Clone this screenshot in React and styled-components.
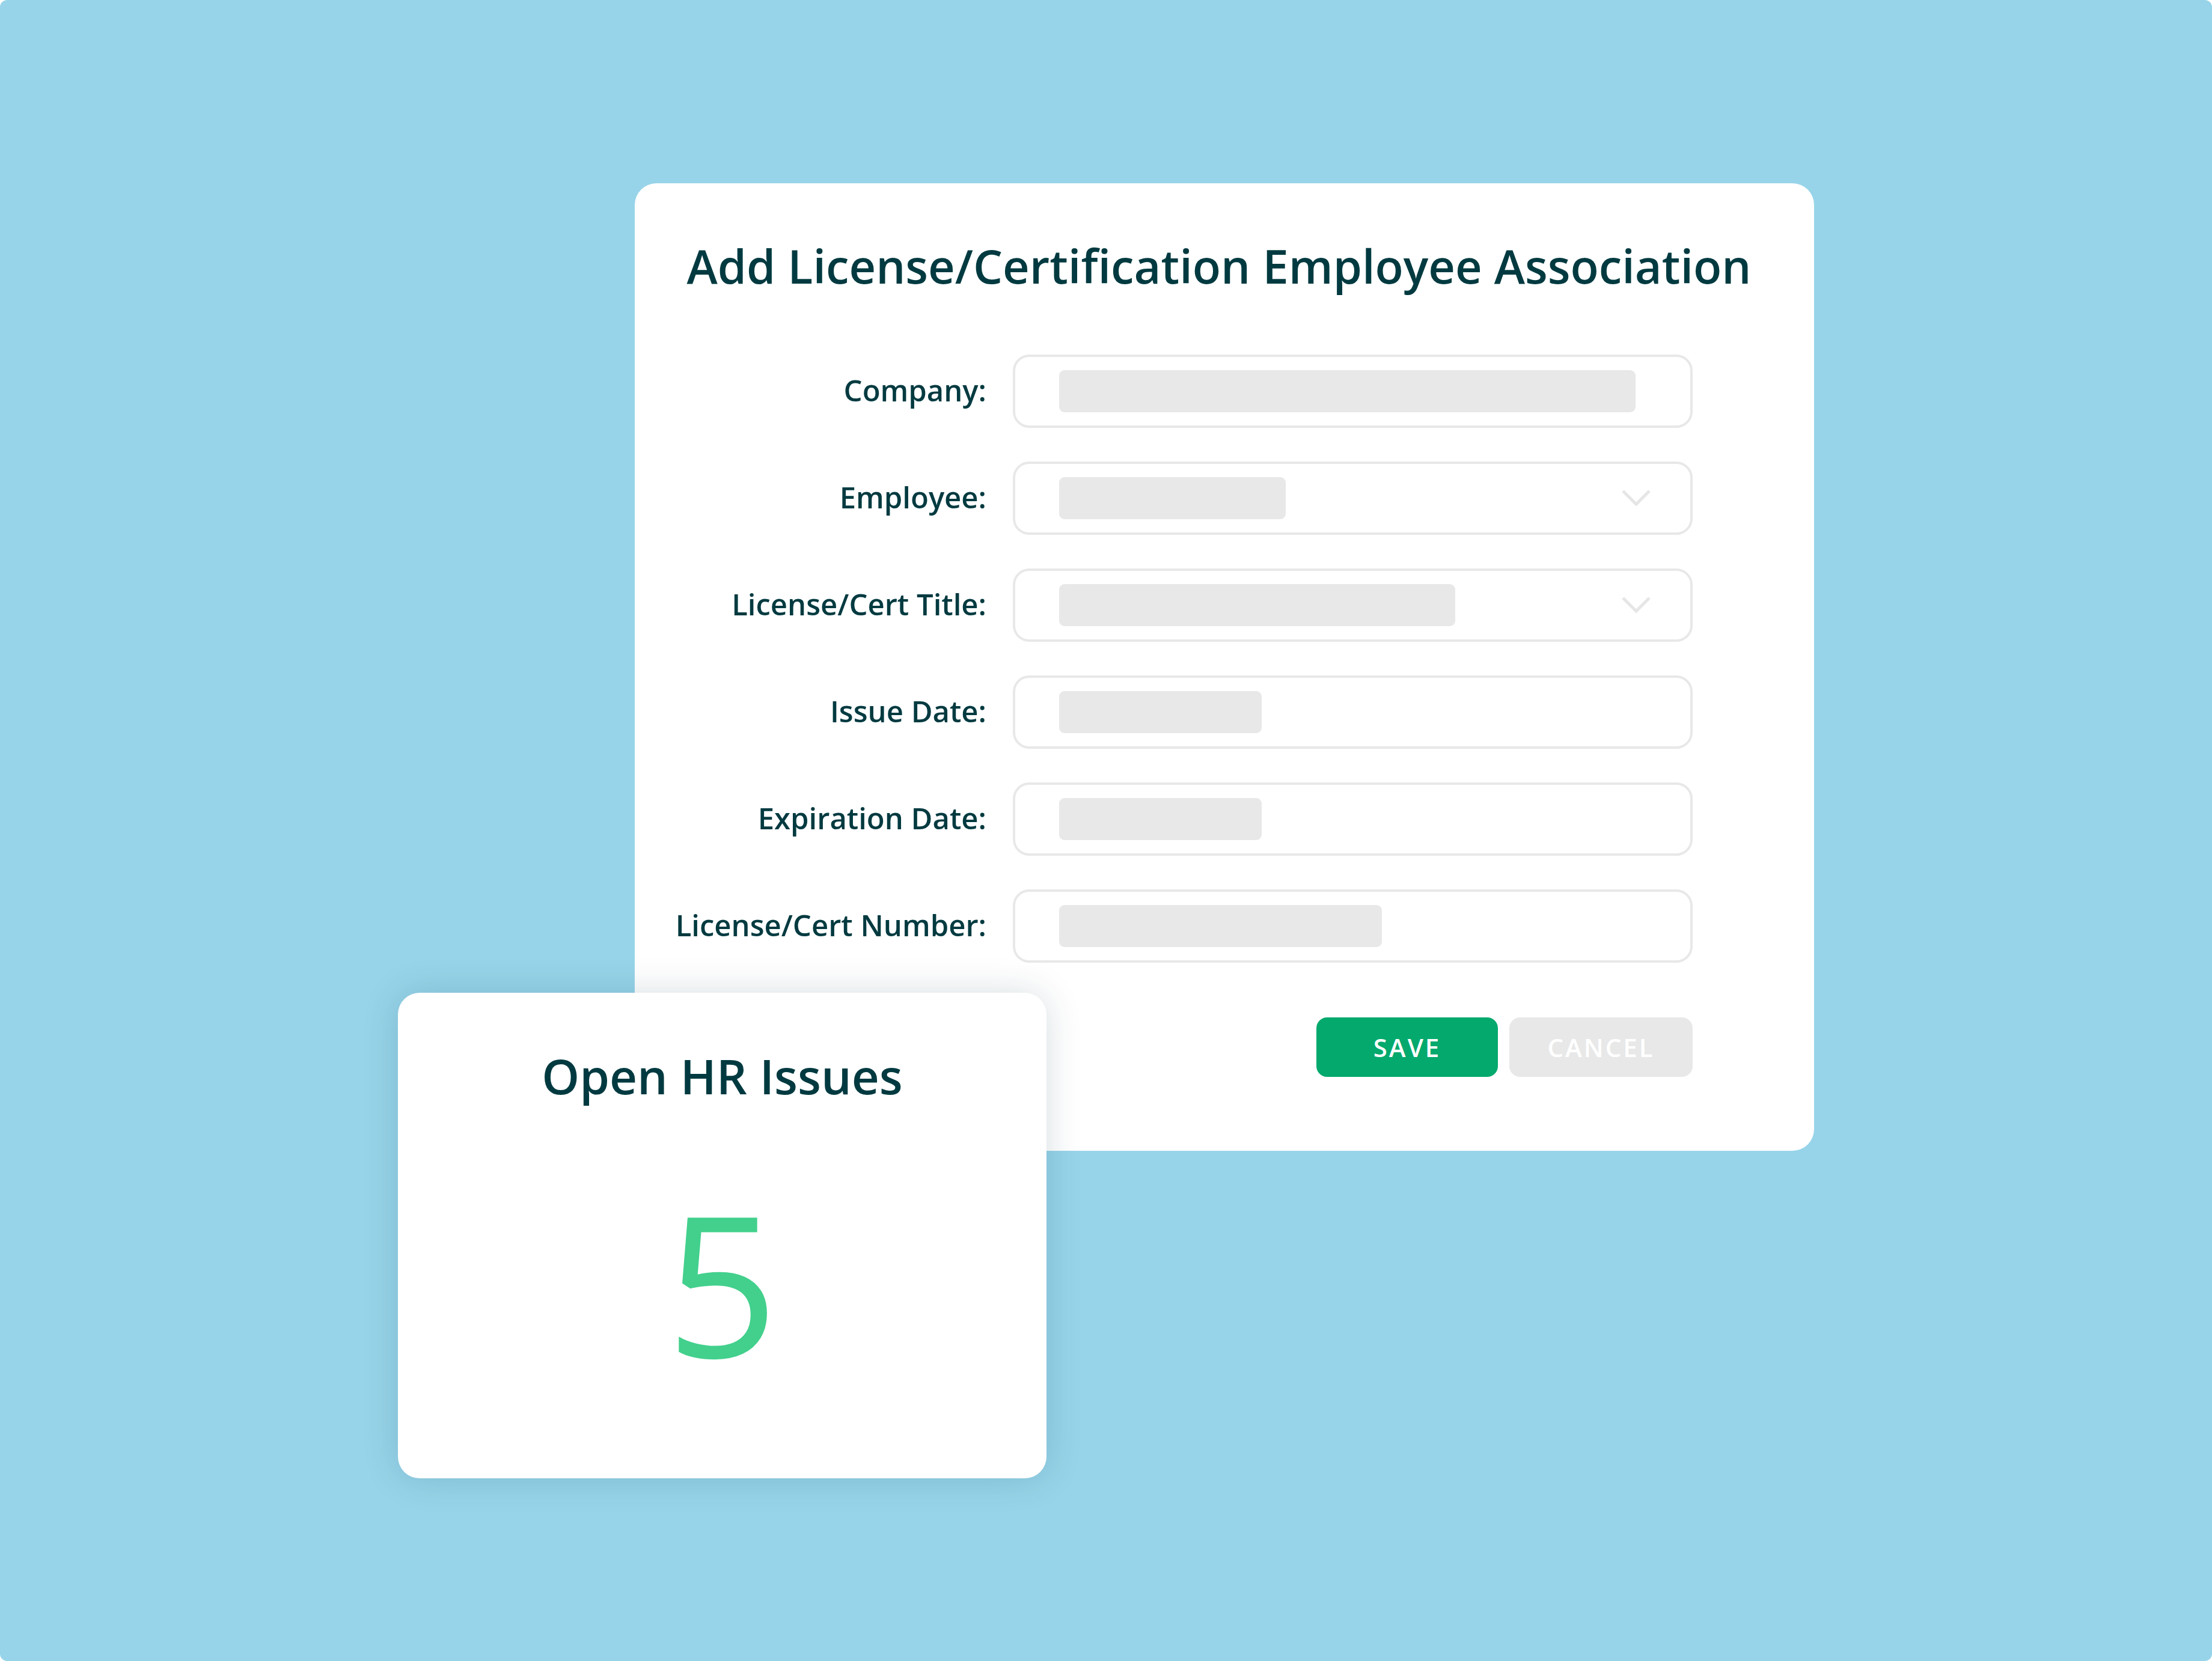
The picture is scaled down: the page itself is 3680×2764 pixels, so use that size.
import { Fragment } from "react";
import styled, { createGlobalStyle } from "styled-components";

const GlobalStyle = createGlobalStyle`
  body {
    margin: 0;
    background: #ffffff;
    font-family: "Open Sans", "Liberation Sans", sans-serif;
  }
`;

const Canvas = styled.div`
  position: relative;
  width: 3680px;
  height: 2764px;
  box-sizing: border-box;
  padding: 305px 0 0 1056px;
  background: #97d4e9;
  border-radius: 12px;
  overflow: hidden;
`;

const Modal = styled.div`
  width: 1962px;
  height: 1610px;
  box-sizing: border-box;
  padding-top: 99px;
  background: #ffffff;
  border-radius: 36px;
`;

const Title = styled.h1`
  margin: 0 0 108px;
  padding-right: 18px;
  text-align: center;
  font-size: 77.5px;
  line-height: 1;
  font-weight: 600;
  color: #003a40;
`;

const Form = styled.div`
  padding: 0 202px 0 40px;
`;

const Rows = styled.div`
  display: grid;
  grid-template-columns: 1fr 1131px;
  column-gap: 44px;
  row-gap: 56px;
  align-items: center;
`;

const Label = styled.label`
  text-align: right;
  font-size: 49px;
  font-weight: 600;
  color: #003a40;
  margin-top: -3px;
`;

const Field = styled.div`
  display: flex;
  align-items: center;
  height: 122px;
  box-sizing: border-box;
  padding: 0 66px 0 73px;
  border: 4px solid #e8e8e8;
  border-radius: 27px;
`;

const Placeholder = styled.div`
  width: ${(p) => p.$w}px;
  height: 70px;
  border-radius: 9px;
  background: #e8e8e8;
`;

const Chevron = styled.svg`
  margin-left: auto;
  width: 48px;
  height: 30px;
`;

const Actions = styled.div`
  display: flex;
  justify-content: flex-end;
  gap: 19px;
  margin-top: 91px;
`;

const Button = styled.button`
  width: ${(p) => (p.$primary ? 302 : 305)}px;
  height: 99px;
  border: none;
  border-radius: 18px;
  background: ${(p) => (p.$primary ? "#04a96d" : "#e8e8e8")};
  color: #ffffff;
  font-family: "Open Sans", "Liberation Sans", sans-serif;
  font-size: 42px;
  font-weight: 600;
  letter-spacing: 3px;
`;

const StatCard = styled.div`
  position: absolute;
  left: 662px;
  top: 1652px;
  width: 1079px;
  height: 808px;
  box-sizing: border-box;
  padding-top: 98px;
  display: flex;
  flex-direction: column;
  align-items: center;
  background: #ffffff;
  border-radius: 36px;
  box-shadow: 0 0 60px rgba(0, 50, 70, 0.16);
`;

const StatTitle = styled.div`
  font-size: 80px;
  line-height: 1;
  font-weight: 600;
  color: #003a40;
`;

const StatValue = styled.div`
  margin-top: 140px;
  font-size: 326px;
  line-height: 1;
  font-weight: 500;
  color: #42d08c;
`;

const fields = [
  { label: "Company:", width: 959 },
  { label: "Employee:", width: 377, select: true },
  { label: "License/Cert Title:", width: 659, select: true },
  { label: "Issue Date:", width: 337 },
  { label: "Expiration Date:", width: 337 },
  { label: "License/Cert Number:", width: 537 },
];

function Caret() {
  return (
    <Chevron viewBox="0 0 48 30">
      <polyline points="2,3 24,25 46,3" fill="none" stroke="#e6e6e6" strokeWidth="5" />
    </Chevron>
  );
}

export default function App() {
  return (
    <>
      <GlobalStyle />
      <Canvas>
        <Modal>
          <Title>Add License/Certification Employee Association</Title>
          <Form>
            <Rows>
              {fields.map((f) => (
                <Fragment key={f.label}>
                  <Label>{f.label}</Label>
                  <Field>
                    <Placeholder $w={f.width} />
                    {f.select && <Caret />}
                  </Field>
                </Fragment>
              ))}
            </Rows>
            <Actions>
              <Button $primary>SAVE</Button>
              <Button>CANCEL</Button>
            </Actions>
          </Form>
        </Modal>
        <StatCard>
          <StatTitle>Open HR Issues</StatTitle>
          <StatValue>5</StatValue>
        </StatCard>
      </Canvas>
    </>
  );
}
